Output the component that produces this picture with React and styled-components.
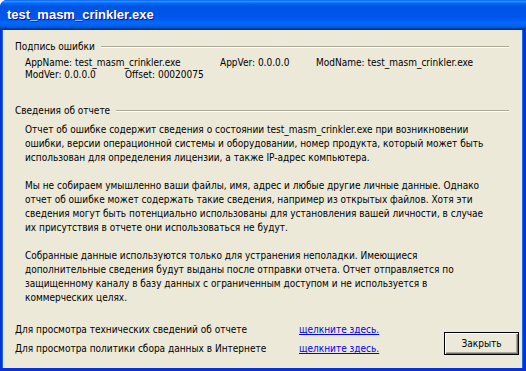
import React from "react";
import styled, { createGlobalStyle } from "styled-components";

const GlobalStyle = createGlobalStyle`
  html, body {
    margin: 0;
    padding: 0;
    background: #ffffff;
  }
  body {
    font-family: "DejaVu Sans Condensed", "DejaVu Sans", sans-serif;
    font-size: 10px;
    color: #000000;
  }
`;

const Window = styled.div`
  width: 526px;
  height: 371px;
  display: flex;
  flex-direction: column;
  overflow: hidden;
  border-radius: 7px 0 0 0;
  background: #0831d9;
`;

const TitleBar = styled.div`
  height: 30px;
  flex: none;
  display: flex;
  align-items: center;
  padding-left: 7px;
  padding-bottom: 1px;
  box-sizing: border-box;
  background: linear-gradient(
    to bottom,
    #0058ee 0%,
    #3593ff 4%,
    #288eff 6%,
    #127dff 8%,
    #036ffc 10%,
    #0262ee 14%,
    #0057e5 20%,
    #0054e3 24%,
    #0055eb 56%,
    #005bf5 66%,
    #026afe 76%,
    #0062ef 86%,
    #0052d6 92%,
    #0040ab 94%,
    #003092 100%
  );
`;

const Title = styled.span`
  font-family: "Liberation Sans", Arial, sans-serif;
  font-weight: bold;
  font-size: 13px;
  color: #ffffff;
  text-shadow: 1px 1px #0f1089;
`;

const Body = styled.div`
  flex: 1;
  display: flex;
  flex-direction: column;
  background: #ece9d8;
  margin: 0 4px 3px 3px;
  padding: 10px 0 0 12px;
  box-shadow: -1px 0 0 #166aee, 1px 0 0 #166aee;
`;

const Group = styled.div`
  display: flex;
  flex-direction: column;
  padding-right: 13px;
  margin-bottom: ${({ $gap }) => $gap || 0}px;
`;

const GroupHeader = styled.div`
  display: flex;
  align-items: center;
  height: 13px;
  line-height: 13px;
  white-space: nowrap;
`;

const Rule = styled.div`
  flex: 1;
  height: 1px;
  margin-left: 6px;
  margin-top: 1px;
  background: #aca899;
  border-bottom: 1px solid #ffffff;
  box-sizing: content-box;
`;

const Info = styled.div`
  margin: 4px 0 0 10px;
  display: flex;
  flex-direction: column;
  line-height: 12px;
`;

const InfoRow = styled.div`
  display: flex;
  white-space: nowrap;
`;

const Field = styled.span`
  width: ${({ $w }) => ($w ? `${$w}px` : "auto")};
  flex: none;
`;

const Report = styled.div`
  margin: 6px 0 0 10px;
  line-height: 14px;
  white-space: nowrap;
`;

const Paragraph = styled.p`
  margin: 0 0 14px;
  &:last-child {
    margin-bottom: 0;
  }
`;

const Footer = styled.div`
  margin-top: auto;
  display: flex;
  align-items: flex-end;
  justify-content: space-between;
  padding-bottom: 10px;
`;

const Links = styled.div`
  display: grid;
  grid-template-columns: 284px auto;
  line-height: 19px;
  white-space: nowrap;
`;

const Link = styled.a`
  color: #0000ff;
  text-decoration: underline;
  cursor: pointer;
`;

const Button = styled.button`
  width: 75px;
  height: 23px;
  margin: 0 3px 3px 0;
  padding: 0;
  font-family: "DejaVu Sans Condensed", "DejaVu Sans", sans-serif;
  font-size: 10px;
  color: #000000;
  background: #ece9d8;
  border: 1px solid #000000;
  border-radius: 0;
  box-shadow: inset 1px 1px #ffffff, inset -1px -1px #716f64,
    inset -2px -2px #aca899;
`;

const p1 = [
  "Отчет об ошибке содержит сведения о состоянии test_masm_crinkler.exe при возникновении",
  "ошибки, версии операционной системы и оборудовании, номер продукта, который может быть",
  "использован для определения лицензии, а также IP-адрес компьютера.",
];
const p2 = [
  "Мы не собираем умышленно ваши файлы, имя, адрес и любые другие личные данные. Однако",
  "отчет об ошибке может содержать такие сведения, например из открытых файлов. Хотя эти",
  "сведения могут быть потенциально использованы для установления вашей личности, в случае",
  "их присутствия в отчете они использоваться не будут.",
];
const p3 = [
  "Собранные данные используются только для устранения неполадки. Имеющиеся",
  "дополнительные сведения будут выданы после отправки отчета. Отчет отправляется по",
  "защищенному каналу в базу данных с ограниченным доступом и не используется в",
  "коммерческих целях.",
];

function Lines({ lines }) {
  return (
    <Paragraph>
      {lines.map((l, i) => (
        <React.Fragment key={i}>
          {l}
          {i < lines.length - 1 && <br />}
        </React.Fragment>
      ))}
    </Paragraph>
  );
}

export default function App() {
  return (
    <>
      <GlobalStyle />
      <Window>
        <TitleBar>
          <Title>test_masm_crinkler.exe</Title>
        </TitleBar>
        <Body>
          <Group $gap={23}>
            <GroupHeader>
              Подпись ошибки
              <Rule />
            </GroupHeader>
            <Info>
              <InfoRow>
                <Field $w={195}>AppName: test_masm_crinkler.exe</Field>
                <Field $w={96}>AppVer: 0.0.0.0</Field>
                <Field>ModName: test_masm_crinkler.exe</Field>
              </InfoRow>
              <InfoRow>
                <Field $w={100}>ModVer: 0.0.0.0</Field>
                <Field>Offset: 00020075</Field>
              </InfoRow>
            </Info>
          </Group>
          <Group>
            <GroupHeader>
              Сведения об отчете
              <Rule />
            </GroupHeader>
            <Report>
              <Lines lines={p1} />
              <Lines lines={p2} />
              <Lines lines={p3} />
            </Report>
          </Group>
          <Footer>
            <Links>
              <span>Для просмотра технических сведений об отчете</span>
              <Link>щелкните здесь.</Link>
              <span>Для просмотра политики сбора данных в Интернете</span>
              <Link>щелкните здесь.</Link>
            </Links>
            <Button>Закрыть</Button>
          </Footer>
        </Body>
      </Window>
    </>
  );
}
